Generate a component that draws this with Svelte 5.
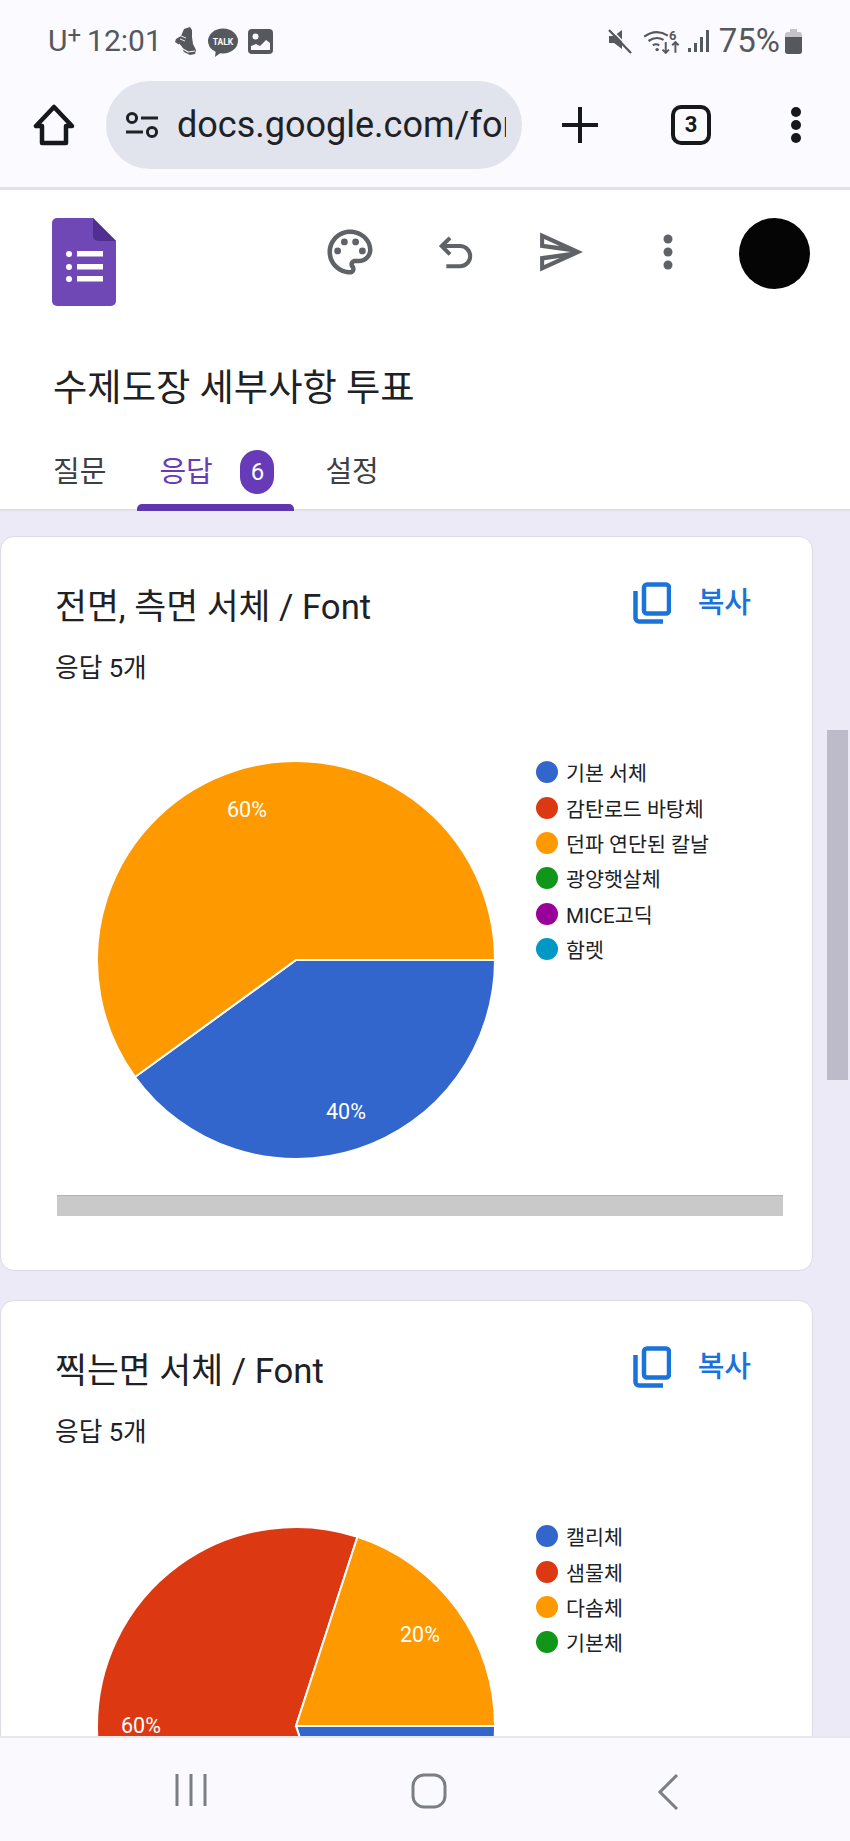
<script>
  const cards = [
    {
      title: "전면, 측면 서체 / Font",
      count: "응답 5개",
      cy: 210,
      slices: [
        { pct: 40, color: "#3366cc", label: "40%", lx: 291, ly: 369 },
        { pct: 60, color: "#ff9900", label: "60%", lx: 192, ly: 67 }
      ],
      legend: [
        ["기본 서체", "#3366cc"],
        ["감탄로드 바탕체", "#dc3912"],
        ["던파 연단된 칼날", "#ff9900"],
        ["광양햇살체", "#109618"],
        ["MICE고딕", "#990099"],
        ["함렛", "#0099c6"]
      ],
      scroll: true
    },
    {
      title: "찍는면 서체 / Font",
      count: "응답 5개",
      cy: 212,
      slices: [
        { pct: 20, color: "#3366cc" },
        { pct: 60, color: "#dc3912", label: "60%", lx: 86, ly: 219 },
        { pct: 20, color: "#ff9900", label: "20%", lx: 365, ly: 128 }
      ],
      legend: [
        ["캘리체", "#3366cc"],
        ["샘물체", "#dc3912"],
        ["다솜체", "#ff9900"],
        ["기본체", "#109618"]
      ],
      scroll: false
    }
  ];

  const cx = 241;
  const r = 199;

  // slices start at 3 o'clock and go clockwise
  function arcs(slices, cy) {
    let from = 0;
    return slices.map((s) => {
      const to = from + (s.pct / 100) * Math.PI * 2;
      const x1 = cx + r * Math.cos(from);
      const y1 = cy + r * Math.sin(from);
      const x2 = cx + r * Math.cos(to);
      const y2 = cy + r * Math.sin(to);
      const large = s.pct > 50 ? 1 : 0;
      from = to;
      return { ...s, d: `M${cx} ${cy}L${x1} ${y1}A${r} ${r} 0 ${large} 1 ${x2} ${y2}Z` };
    });
  }
</script>

<div class="phone">
  <div class="status">
    <div class="status-left">
      <span class="carrier">U<sup>+</sup></span>
      <span class="clock">12:01</span>
      <svg class="shoe" viewBox="0 0 22 28" width="22" height="28">
        <path d="M10 2l6-2 2 3 0 7 1 7 3 6-1 4-5 1-6-3-3-6-6-4 1-3 5-3z" fill="#55585c" />
        <path d="M5 17l4 5 5 3 7-1" stroke="#fafaff" stroke-width="1.2" fill="none" />
        <path d="M7 9l5 2M6 12l5 2" stroke="#fafaff" stroke-width="0.9" />
      </svg>
      <svg class="talk" viewBox="0 0 30 30" width="30" height="30">
        <ellipse cx="15" cy="13" rx="15" ry="12.5" fill="#55585c" />
        <path d="M8 21l-1 8 8-6z" fill="#55585c" />
        <text x="15" y="16.5" text-anchor="middle" class="talk-text">TALK</text>
      </svg>
      <svg class="pic" viewBox="0 0 25 25" width="25" height="25">
        <rect width="25" height="25" rx="4" fill="#55585c" />
        <circle cx="7.5" cy="7.5" r="3" fill="#fafaff" />
        <path d="M3 21v-4l5-2 4 2 6-6 4 3v7z" fill="#fafaff" />
      </svg>
    </div>
    <div class="status-right">
      <svg viewBox="0 0 26 26" width="26" height="26">
        <path d="M2 8h5l8-6v19l-8-6H2z" fill="#55585c" />
        <path d="M2 2l22 23" stroke="#55585c" stroke-width="2.4" />
        <path d="M4 1l22 23" stroke="#fafaff" stroke-width="1.4" />
      </svg>
      <svg class="wifi" viewBox="0 0 36 26" width="39" height="28">
        <path d="M1 9q11-8 22-1M5 13q7-5 14-1M9 17q3-2 6 0" stroke="#55585c" stroke-width="2" fill="none" />
        <circle cx="13" cy="21" r="1.6" fill="#55585c" />
        <text x="24" y="12" class="wifi-six">6</text>
        <path d="M21 14v10m-3-3l3 3 3-3M30 24v-10m-3 3l3-3 3 3" stroke="#55585c" stroke-width="1.8" fill="none" />
      </svg>
      <svg class="signal" viewBox="0 0 22 24" width="22" height="24">
        <rect x="0" y="19" width="3" height="4" fill="#55585c" />
        <rect x="6" y="14" width="3" height="9" fill="#55585c" />
        <rect x="12" y="8" width="3" height="15" fill="#55585c" />
        <rect x="18" y="1" width="3" height="22" fill="#55585c" />
      </svg>
      <span class="pct">75%</span>
      <svg class="batt" viewBox="0 0 17 25" width="17" height="25">
        <path d="M5 0h7v3h2a3 3 0 0 1 3 3v16a3 3 0 0 1-3 3H3a3 3 0 0 1-3-3V6a3 3 0 0 1 3-3h2z" fill="#c3c4c8" />
        <path d="M0 8h17v14a3 3 0 0 1-3 3H3a3 3 0 0 1-3-3z" fill="#55585c" />
      </svg>
    </div>
  </div>

  <div class="toolbar">
    <svg class="home" viewBox="0 0 42 42" width="42" height="42">
      <path d="M21 3L3 22h6v17h24V22h6z" fill="none" stroke="#17181a" stroke-width="4.5" stroke-linejoin="round" />
    </svg>
    <div class="url">
      <svg viewBox="0 0 34 28" width="34" height="28">
        <circle cx="7" cy="7" r="4.6" fill="none" stroke="#202124" stroke-width="3" />
        <path d="M16 7h17M1 21h17" stroke="#202124" stroke-width="3" />
        <circle cx="27" cy="21" r="4.6" fill="none" stroke="#202124" stroke-width="3" />
      </svg>
      <span class="url-text">docs.google.com/forms/d/1</span>
    </div>
    <svg class="plus" viewBox="0 0 36 36" width="36" height="36">
      <path d="M18 0v36M0 18h36" stroke="#17181a" stroke-width="4" />
    </svg>
    <div class="tabs-count">3</div>
    <svg class="more" viewBox="0 0 12 36" width="12" height="36">
      <circle cx="6" cy="5" r="5" fill="#17181a" />
      <circle cx="6" cy="18" r="5" fill="#17181a" />
      <circle cx="6" cy="31" r="5" fill="#17181a" />
    </svg>
  </div>

  <header class="form-head">
    <div class="head-icons">
      <svg class="logo" viewBox="0 0 64 88" width="64" height="88">
        <path d="M5 0h36l23 23v60a5 5 0 0 1-5 5H5a5 5 0 0 1-5-5V5a5 5 0 0 1 5-5z" fill="#7048b6" />
        <path d="M41 0l23 23H46a5 5 0 0 1-5-5z" fill="#4f2f90" />
        <circle cx="17" cy="36" r="3" fill="#fff" />
        <circle cx="17" cy="49" r="3" fill="#fff" />
        <circle cx="17" cy="61" r="3" fill="#fff" />
        <rect x="25" y="33" width="26" height="5.5" fill="#fff" />
        <rect x="25" y="46" width="26" height="5.5" fill="#fff" />
        <rect x="25" y="58" width="26" height="5.5" fill="#fff" />
      </svg>
      <div class="head-actions">
        <svg viewBox="0 0 24 24" width="54" height="54" fill="#5f6368">
          <path d="M12 22C6.49 22 2 17.51 2 12S6.49 2 12 2s10 4.04 10 9c0 3.31-2.69 6-6 6h-1.77c-.28 0-.5.22-.5.5 0 .12.05.23.13.33.41.47.64 1.06.64 1.67 0 1.38-1.12 2.5-2.5 2.5zm0-18c-4.41 0-8 3.59-8 8s3.59 8 8 8c.28 0 .5-.22.5-.5a.54.54 0 0 0-.14-.35c-.41-.46-.63-1.05-.63-1.65 0-1.38 1.12-2.5 2.5-2.5H16c2.21 0 4-1.79 4-4 0-3.86-3.59-7-8-7z" />
          <circle cx="6.5" cy="11.5" r="1.5" />
          <circle cx="9.5" cy="7.5" r="1.5" />
          <circle cx="14.5" cy="7.5" r="1.5" />
          <circle cx="17.5" cy="11.5" r="1.5" />
        </svg>
        <svg viewBox="0 0 38 36" width="35" height="33" fill="none" stroke="#5f6368" stroke-width="4.4">
          <path d="M13 2L4 11l9 9M5 11h19a11 11 0 0 1 0 22H9" />
        </svg>
        <svg viewBox="0 0 24 24" width="49" height="52" preserveAspectRatio="none" fill="#5f6368">
          <path d="M4.01 6.03l7.51 3.22-7.52-1 .01-2.22m7.5 8.72L4 17.97v-2.22l7.51-1M2.01 3L2 10l15 2-15 2 .01 7L23 12 2.01 3z" />
        </svg>
        <svg viewBox="0 0 12 36" width="12" height="36" fill="#5f6368">
          <circle cx="6" cy="5" r="4.5" />
          <circle cx="6" cy="18" r="4.5" />
          <circle cx="6" cy="31" r="4.5" />
        </svg>
      </div>
      <div class="avatar"></div>
    </div>
    <h1>수제도장 세부사항 투표</h1>
    <nav class="tabs">
      <span class="tab">질문</span>
      <span class="tab active">응답<b class="badge">6</b></span>
      <span class="tab">설정</span>
    </nav>
  </header>

  <main class="content">
    {#each cards as card}
      <section class="card">
        <div class="card-head">
          <h2>{card.title}</h2>
          <div class="copy">
            <svg viewBox="0 0 38 42" width="38" height="42" fill="none" stroke="#1a73d8" stroke-width="4.5">
              <rect x="11" y="2.5" width="25" height="29" rx="3" />
              <path d="M2.5 9v27a3.5 3.5 0 0 0 3.5 3.5h24" />
            </svg>
            <span>복사</span>
          </div>
        </div>
        <p class="count">{card.count}</p>
        <div class="chart">
          <svg viewBox="0 0 481 420" width="481" height="420">
            {#each arcs(card.slices, card.cy) as s}
              <path d={s.d} fill={s.color} stroke="#fff" stroke-width="2" />
            {/each}
            {#each card.slices as s}
              {#if s.label}
                <text x={s.lx} y={s.ly} class="pie-label" text-anchor="middle">{s.label}</text>
              {/if}
            {/each}
          </svg>
          <ul class="legend">
            {#each card.legend as [name, color]}
              <li><i style="background:{color}"></i>{name}</li>
            {/each}
          </ul>
        </div>
        {#if card.scroll}
          <div class="hscroll"></div>
        {/if}
      </section>
    {/each}
    <div class="page-scroll"></div>
  </main>

  <div class="navbar">
    <svg viewBox="0 0 32 34" width="32" height="34" fill="none" stroke="#7b7e83" stroke-width="3">
      <path d="M2 1v32M16 1v32M30 1v32" />
    </svg>
    <svg viewBox="0 0 36 36" width="36" height="36" fill="none" stroke="#7b7e83" stroke-width="3">
      <rect x="2" y="2" width="32" height="32" rx="11" />
    </svg>
    <svg viewBox="0 0 22 38" width="22" height="38" fill="none" stroke="#7b7e83" stroke-width="3">
      <path d="M20 2L3 19l17 17" />
    </svg>
  </div>
</div>

<style>
  :global(body) {
    background: #fafaff;
  }

  .phone {
    width: 850px;
    height: 1841px;
    display: flex;
    flex-direction: column;
    overflow: hidden;
    font-family: Roboto, "Noto Sans CJK KR", sans-serif;
    color: #202124;
    background: #fafaff;
  }

  .status {
    height: 60px;
    flex: none;
    padding: 22px 48px 0;
    box-sizing: border-box;
    display: flex;
    justify-content: space-between;
    align-items: center;
    color: #55585c;
  }

  .status-left,
  .status-right {
    display: flex;
    align-items: center;
  }

  .carrier,
  .clock {
    font-size: 30px;
    line-height: 36px;
  }

  .pct {
    font-size: 33px;
    line-height: 36px;
    margin-left: 9px;
  }

  .carrier sup {
    font-size: 24px;
    line-height: 0;
    vertical-align: 8px;
  }

  .clock {
    margin-left: 6px;
  }

  .shoe {
    margin-left: 12px;
  }

  .talk {
    margin-left: 12px;
    margin-top: 4px;
  }

  .talk-text {
    font-size: 8.5px;
    font-weight: 700;
    fill: #fafaff;
  }

  .pic {
    margin-left: 10px;
  }

  .wifi {
    margin-left: 10px;
  }

  .wifi-six {
    font-size: 12px;
    font-weight: 700;
    fill: #55585c;
  }

  .signal {
    margin-left: 6px;
  }

  .batt {
    margin-left: 5px;
  }

  .toolbar {
    height: 130px;
    flex: none;
    box-sizing: border-box;
    border-bottom: 3px solid #e2e2e8;
    padding: 21px 0 0 33px;
    display: flex;
    align-items: flex-start;
  }

  .home {
    margin-top: 23px;
  }

  .url {
    margin-left: 31px;
    width: 416px;
    height: 88px;
    box-sizing: border-box;
    border-radius: 44px;
    background: #e1e4ec;
    padding: 0 16px 0 19px;
    display: flex;
    align-items: center;
    gap: 18px;
    overflow: hidden;
  }

  .url svg {
    flex: none;
  }

  .url-text {
    font-size: 36px;
    white-space: nowrap;
    overflow: hidden;
    color: #202124;
  }

  .plus {
    margin: 26px 0 0 40px;
  }

  .tabs-count {
    margin: 24px 0 0 73px;
    width: 40px;
    height: 40px;
    box-sizing: border-box;
    border: 4px solid #17181a;
    border-radius: 10px;
    font-size: 22px;
    font-weight: 700;
    line-height: 32px;
    text-align: center;
    color: #17181a;
  }

  .more {
    margin: 26px 0 0 79px;
  }

  .form-head {
    flex: none;
    height: 321px;
    box-sizing: border-box;
    background: #fff;
    border-bottom: 2px solid #e0dfe8;
    padding: 28px 0 0 53px;
  }

  .head-icons {
    display: flex;
    align-items: flex-start;
    margin-left: -1px;
  }

  .head-actions {
    display: flex;
    align-items: center;
    margin: 7px 0 0 207px;
    height: 54px;
  }

  .head-actions svg:nth-child(2) {
    margin-left: 61px;
  }

  .head-actions svg:nth-child(3) {
    margin-left: 63px;
  }

  .head-actions svg:nth-child(4) {
    margin-left: 77px;
  }

  .avatar {
    width: 71px;
    height: 71px;
    border-radius: 50%;
    background: #050505;
    margin-left: 65px;
  }

  h1 {
    margin: 57px 0 0;
    font-size: 37.3px;
    font-weight: 400;
    line-height: 50px;
  }

  .tabs {
    display: flex;
    margin-top: 37px;
    height: 61px;
    font-size: 29px;
    color: #3c4043;
  }

  .tab {
    line-height: 44px;
    position: relative;
  }

  .tab.active {
    margin-left: 31px;
    box-sizing: border-box;
    width: 157px;
    padding-left: 22px;
    height: 61px;
    margin-right: 31px;
    color: #673ab7;
  }

  .tab.active::after {
    content: "";
    position: absolute;
    left: 0;
    right: 0;
    bottom: 0;
    height: 7px;
    border-radius: 5px 5px 0 0;
    background: #5f36b0;
  }

  .badge {
    position: absolute;
    left: 103px;
    top: 0;
    width: 34px;
    height: 44px;
    border-radius: 17px;
    background: #673ab7;
    color: #fff;
    font-size: 24px;
    font-weight: 400;
    text-align: center;
    line-height: 44px;
  }

  .content {
    flex: 1;
    min-height: 0;
    overflow: hidden;
    position: relative;
    background: #eceaf7;
    padding-top: 25px;
  }

  .card {
    width: 813px;
    box-sizing: border-box;
    background: #fff;
    border: 1px solid #dcdbe4;
    border-radius: 14px;
    padding: 45px 0 54px 54px;
    margin-bottom: 29px;
  }

  .card-head {
    display: flex;
    justify-content: space-between;
    align-items: flex-start;
    padding-right: 61px;
    height: 50px;
  }

  h2 {
    margin: 0;
    font-size: 34.7px;
    font-weight: 400;
    line-height: 50px;
  }

  .copy {
    display: flex;
    align-items: flex-start;
    gap: 27px;
    color: #1a73d8;
    font-size: 29px;
    font-weight: 500;
    line-height: 42px;
  }

  .count {
    margin: 18px 0 0;
    font-size: 25.7px;
    line-height: 36px;
    color: #202124;
  }

  .chart {
    display: flex;
    margin-top: 64px;
    height: 420px;
  }

  .chart svg {
    flex: none;
  }

  .pie-label {
    fill: #fff;
    font-size: 21.5px;
  }

  .legend {
    list-style: none;
    margin: 4.5px 0 0;
    padding: 0;
    font-size: 20.6px;
  }

  .legend li {
    height: 35.4px;
    display: flex;
    align-items: center;
    gap: 8px;
    white-space: nowrap;
  }

  .legend i {
    width: 22px;
    height: 22px;
    border-radius: 50%;
  }

  .hscroll {
    margin: 25px 29px 0 2px;
    height: 21px;
    box-sizing: border-box;
    background: #c9c9c9;
    border-top: 1px solid #b4b4b4;
  }

  .page-scroll {
    position: absolute;
    left: 827px;
    top: 219px;
    width: 21px;
    height: 350px;
    background: #bdbbc9;
  }

  .navbar {
    flex: none;
    height: 105px;
    box-sizing: border-box;
    background: #f9f9fe;
    border-top: 2px solid #e6e6ec;
    display: flex;
    align-items: flex-start;
    padding: 35px 0 0 175px;
  }

  .navbar svg:nth-child(2) {
    margin-left: 204px;
  }

  .navbar svg:nth-child(3) {
    margin-left: 210px;
  }
</style>
